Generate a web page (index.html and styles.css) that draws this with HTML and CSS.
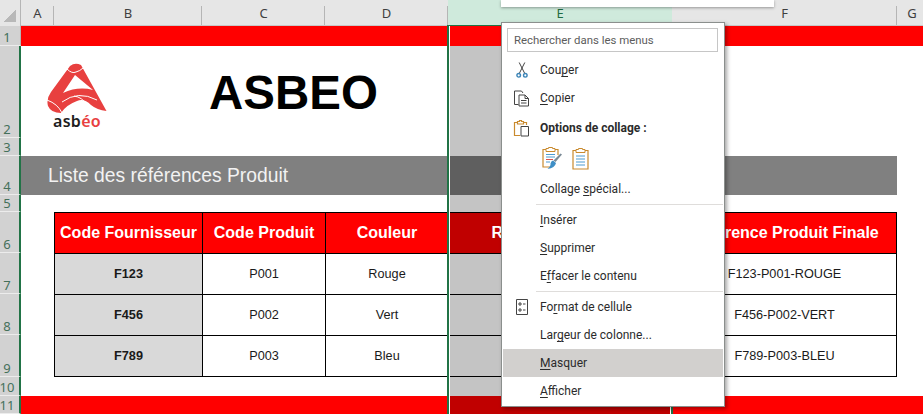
FILE: index.html
```html
<!DOCTYPE html>
<html lang="fr">
<head>
<meta charset="utf-8">
<title>ASBEO - Liste des références Produit</title>
<link rel="stylesheet" href="styles.css">
</head>
<body>
<div class="sheet">
  <div class="corner"><span class="corner-mark"></span></div>
  <div class="ch ca">A</div>
  <div class="ch cb">B</div>
  <div class="ch cc">C</div>
  <div class="ch cd">D</div>
  <div class="ch ce ch-active">E</div>
  <div class="ch cf">F</div>
  <div class="ch cg">G</div>

  <div class="rh r1 rh-first">1</div>
  <div class="rh r2">2</div>
  <div class="rh r3">3</div>
  <div class="rh r4">4</div>
  <div class="rh r5">5</div>
  <div class="rh r6">6</div>
  <div class="rh r7">7</div>
  <div class="rh r8">8</div>
  <div class="rh r9">9</div>
  <div class="rh r10">10</div>
  <div class="rh r11">11</div>

  <div class="red r1 span-all"></div>

  <div class="logo-cell r2">
    <div class="logo">
      <svg class="logo-mark" viewBox="47 62 60 52" width="60" height="52" aria-hidden="true">
        <path class="logo-fill" fill-rule="evenodd" d="M70 66Q75 62 81 65L106.500 111Q97 110 91 105Q84 98 77 101Q66 105 61 113Q51 113 48 106Q46 99 51 92ZM75 75L63 93Q78 86 93 90Z"/>
        <path class="logo-line" d="M67 69Q72 74 76 72Q80 71 83 68M47 100Q58 104 62 113M62 102Q78 90 97 100M74 96Q82 97 87 105"/>
      </svg>
      <div class="logo-text">asb<span class="logo-accent">éo</span></div>
    </div>
  </div>
  <div class="title r2">ASBEO</div>
  <div class="sel ce r2"></div>
  <div class="sel ce r3"></div>
  <div class="band r4 span-left">Liste des références Produit</div>
  <div class="band band-sel ce r4"></div>
  <div class="band cf r4"></div>
  <div class="sel ce r5"></div>

  <div class="cell head cb r6 first-col">Code Fournisseur</div>
  <div class="cell head cc r6">Code Produit</div>
  <div class="cell head cd r6">Couleur</div>
  <div class="cell head head-sel ce r6">Référence Produit</div>
  <div class="cell head cf r6 last-col">Référence Produit Finale</div>

  <div class="cell code cb r7 first-col">F123</div>
  <div class="cell cc r7">P001</div>
  <div class="cell cd r7">Rouge</div>
  <div class="cell cell-sel ce r7"></div>
  <div class="cell cf r7 last-col">F123-P001-ROUGE</div>

  <div class="cell code cb r8 first-col">F456</div>
  <div class="cell cc r8">P002</div>
  <div class="cell cd r8">Vert</div>
  <div class="cell cell-sel ce r8"></div>
  <div class="cell cf r8 last-col">F456-P002-VERT</div>

  <div class="cell code cb r9 first-col last-row">F789</div>
  <div class="cell cc r9 last-row">P003</div>
  <div class="cell cd r9 last-row">Bleu</div>
  <div class="cell cell-sel ce r9 last-row"></div>
  <div class="cell cf r9 last-col last-row">F789-P003-BLEU</div>

  <div class="sel ce r10"></div>

  <div class="red r11 span-left"></div>
  <div class="red red-sel ce r11"></div>
  <div class="red r11 span-right"></div>

  <div class="selection ce"></div>
</div>

<div class="ribbon-popup"></div>

<nav class="menu">
  <div class="search">Rechercher dans les menus</div>
  <div class="item">
    <span class="ico">
      <svg viewBox="0 0 12 16" width="12" height="16" aria-hidden="true">
        <path class="i-dark" d="M3.200 .5L8.500 11M8.800 .5L3.500 11"/>
        <circle class="i-blue" cx="2.700" cy="13.300" r="1.800"/>
        <circle class="i-blue" cx="9.300" cy="13.300" r="1.800"/>
      </svg>
    </span>
    <span>Cou<u>p</u>er</span>
  </div>
  <div class="item">
    <span class="ico">
      <svg viewBox="0 0 17 17" width="17" height="17" aria-hidden="true">
        <path class="i-dark" d="M5.500 14.500H1.500V1H8.500L10 3"/>
        <path class="i-dark" d="M6 5H12L15.500 8.500V16H6ZM12 5V8.500H15.500M8 10.500H13.500M8 13H13.500"/>
      </svg>
    </span>
    <span><u>C</u>opier</span>
  </div>
  <div class="item item-title">
    <span class="ico">
      <svg viewBox="0 0 17 17" width="17" height="17" aria-hidden="true">
        <path class="i-orange" d="M4.500 2.500H1.500V15.500H7M10.500 2.500H13.500V5"/>
        <path class="i-orange" d="M4.500 4V1.500H6.500V.5H8.500V1.500H10.500V4Z"/>
        <path class="i-dark" d="M8 6.500H15.500V16H8Z"/>
      </svg>
    </span>
    <span class="title-text">Options de collage :</span>
  </div>
  <div class="paste-row">
    <svg viewBox="0 0 21 23" width="21" height="23" aria-hidden="true">
      <path class="i-orange" d="M4 2.500H1V20H8M13 2.500H16V8"/>
      <path class="i-orange-fill" d="M4 4.500V1.500H6.500V.5H10.500V1.500H13V4.500Z"/>
      <path class="i-blue-line" d="M4 7.500H13M4 10H13"/>
      <path class="i-red-line" d="M4 12.500H11"/>
      <path class="i-blue-line" d="M4 15H8"/>
      <path class="i-brush" d="M20 7.500L13.500 15L11.500 13.500L18.500 6.500Z"/>
      <path class="i-brush-head" d="M11 13.500L14 16Q13 21 5.500 22Q9 19 8.500 16.500Q9 14 11 13.500Z"/>
    </svg>
    <svg viewBox="0 0 17 22" width="17" height="22" aria-hidden="true">
      <path class="i-orange" d="M4 2.500H1V21H16V2.500H13"/>
      <path class="i-orange-fill" d="M4 4.500V1.500H6.500V.5H10.500V1.500H13V4.500Z"/>
      <path class="i-blue-line" d="M4 8H13M4 11H13M4 14H13M4 17H13"/>
    </svg>
  </div>
  <div class="item"><span class="ico"></span><span>Collage <u>s</u>pécial...</span></div>
  <div class="sep"></div>
  <div class="item"><span class="ico"></span><span><u>I</u>nsérer</span></div>
  <div class="item"><span class="ico"></span><span><u>S</u>upprimer</span></div>
  <div class="item"><span class="ico"></span><span>E<u>f</u>facer le contenu</span></div>
  <div class="sep"></div>
  <div class="item">
    <span class="ico">
      <svg viewBox="0 0 12 16" width="12" height="16" aria-hidden="true">
        <path class="i-dark" d="M.5.5H11.500V15.500H.5Z"/>
        <path class="i-dark" d="M3 4H5V6H3ZM3 10H5V12H3ZM7 5H9.500M7 11H9.500"/>
      </svg>
    </span>
    <span>Fo<u>r</u>mat de cellule</span>
  </div>
  <div class="item"><span class="ico"></span><span>Lar<u>g</u>eur de colonne...</span></div>
  <div class="item item-hover"><span class="ico"></span><span><u>M</u>asquer</span></div>
  <div class="item"><span class="ico"></span><span><u>A</u>fficher</span></div>
</nav>
</body>
</html>
```
FILE: styles.css
```css
* {
  box-sizing: border-box;
}

html,
body {
  margin: 0;
  height: 100%;
  overflow: hidden;
  background: #fff;
}

.sheet {
  display: grid;
  grid-template-columns: 21px 33px 148px 123px 123px 224px 225px 30px;
  grid-template-rows: 26px 20px 92px 18px 39px 17px 41px 41px 41px 42px 19px 18px;
  width: 927px;
  height: 414px;
  font-family: "Liberation Sans", Arial, sans-serif;
}

/* columns */
.ca { grid-column: 2; }
.cb { grid-column: 3; }
.cc { grid-column: 4; }
.cd { grid-column: 5; }
.ce { grid-column: 6; }
.cf { grid-column: 7; }
.cg { grid-column: 8; }
.span-left { grid-column: 2 / 6; }
.span-right { grid-column: 7 / 9; }
.span-all { grid-column: 2 / 9; }

/* rows */
.r1 { grid-row: 2; }
.r2 { grid-row: 3; }
.r3 { grid-row: 4; }
.r4 { grid-row: 5; }
.r5 { grid-row: 6; }
.r6 { grid-row: 7; }
.r7 { grid-row: 8; }
.r8 { grid-row: 9; }
.r9 { grid-row: 10; }
.r10 { grid-row: 11; }
.r11 { grid-row: 12; }

/* headers */
.corner {
  grid-column: 1;
  grid-row: 1;
  display: flex;
  align-items: flex-end;
  justify-content: flex-end;
  padding: 0 4px 4px 0;
  background: #e6e6e6;
  border-right: 1px solid #b5b5b5;
}

.corner-mark {
  width: 12px;
  height: 12px;
  background: linear-gradient(to bottom right, transparent 50%, #b8b8b8 50%);
}

.ch {
  grid-row: 1;
  display: flex;
  align-items: flex-end;
  justify-content: center;
  padding-bottom: 3px;
  background: linear-gradient(to right, #e6e6e6 calc(100% - 1px), #b5b5b5 calc(100% - 1px)) bottom / 100% 19px no-repeat, #e6e6e6;
  border-bottom: 1px solid #c8c8c8;
  color: #3f3f3f;
  font: 13px/18px "Noto Sans", sans-serif;
}

.ch-active {
  background: #cfeadc;
  border-bottom-color: #217346;
  color: #1f6b42;
}

.rh {
  grid-column: 1;
  display: flex;
  align-items: flex-end;
  justify-content: center;
  padding-right: 5px;
  background: #d2d2d2;
  border-right: 2px solid #217346;
  border-bottom: 1px solid #ececec;
  color: #44705a;
  font: 13px/16px "Noto Sans", sans-serif;
}

.rh-first {
  border-right: 1px solid #b5b5b5;
  padding-right: 6px;
}

/* sheet content */
.red {
  background: #f00;
}

.red-sel {
  background: #c00000;
}

.logo-cell {
  grid-column: 1 / 4;
  padding: 16px 0 0 47px;
}

.logo {
  display: flex;
  flex-direction: column;
  align-items: center;
  width: 60px;
}

.logo-mark {
  display: block;
}

.logo-fill {
  fill: #e8403f;
}

.logo-line {
  fill: none;
  stroke: #fff;
  stroke-width: 1;
}

.logo-text {
  color: #1f1f1f;
  font: 600 16px/15px "Noto Sans", sans-serif;
  letter-spacing: 0.3px;
}

.logo-accent {
  color: #e8403f;
}

.title {
  grid-column: 4 / 6;
  display: flex;
  align-items: center;
  padding-left: 7px;
  color: #000;
  font-size: 47.500px;
  font-weight: 700;
}

.sel {
  background: #c4c4c4;
}

.band {
  display: flex;
  align-items: center;
  padding-left: 27px;
  background: #808080;
  color: #f2f2f2;
  font-size: 19.300px;
}

.band-sel {
  background: #5f5f5f;
}

.cell {
  display: flex;
  align-items: center;
  justify-content: center;
  border-top: 1px solid #000;
  border-left: 1px solid #000;
  background: #fff;
  color: #1a1a1a;
  font-size: 12.700px;
}

.first-col {
  border-left: 1px solid #000;
}

.last-col {
  border-right: 1px solid #000;
}

.last-row {
  border-bottom: 1px solid #000;
}

.head {
  background: #f00;
  color: #fff;
  font-size: 16px;
  font-weight: 700;
  white-space: nowrap;
}

.head-sel {
  background: #c00000;
}

.code {
  background: #d9d9d9;
  font-size: 12.700px;
  font-weight: 700;
}

.cell-sel {
  background: #c4c4c4;
}

.selection {
  grid-row: 1 / 13;
  margin: 25px -1px 0 -1px;
  border: 1px solid #217346;
  border-width: 1px 2px 0;
  box-shadow: inset 1px 0 0 #fff, inset -1px 0 0 #fff;
  pointer-events: none;
}

/* floating */
.ribbon-popup {
  position: absolute;
  left: 501px;
  top: 0;
  width: 273px;
  height: 7px;
  background: #fff;
  box-shadow: 0 1px 3px rgba(0, 0, 0, 0.35);
}

.menu {
  position: absolute;
  left: 501px;
  top: 22px;
  width: 224px;
  height: 385px;
  padding: 5px 1px 0;
  border: 1px solid #8b8f8d;
  background: #fff;
  box-shadow: 2px 2px 4px rgba(0, 0, 0, 0.35);
  color: #2b2b2b;
  font: 12px/16px Roboto, sans-serif;
}

.search {
  display: flex;
  align-items: center;
  height: 24px;
  margin: 0 5px 4px 4px;
  padding-left: 6px;
  border: 1px solid #c6c6c6;
  color: #5c5c5c;
  font-size: 11.400px;
}

.item {
  display: flex;
  align-items: center;
  height: 28px;
}

.item-title {
  margin-top: 2px;
}

.item-hover {
  background: #d2d0ce;
}

.ico {
  display: flex;
  flex: none;
  align-items: center;
  justify-content: center;
  width: 37px;
}

.title-text {
  font-weight: 700;
}

.paste-row {
  display: flex;
  align-items: center;
  gap: 9px;
  height: 33px;
  padding-left: 39px;
}

.sep {
  height: 1px;
  margin: 1px 0 1px 33px;
  background: #dfdddb;
}

u {
  text-underline-offset: 2px;
}

.i-dark {
  fill: none;
  stroke: #444;
  stroke-width: 1;
}

.i-blue {
  fill: none;
  stroke: #3d86b8;
  stroke-width: 1.400;
}

.i-orange {
  fill: none;
  stroke: #c98a2e;
  stroke-width: 1.200;
}

.i-orange-fill {
  fill: #fff;
  stroke: #c98a2e;
  stroke-width: 1;
}

.i-blue-line {
  fill: none;
  stroke: #4d9bd0;
  stroke-width: 1;
}

.i-red-line {
  fill: none;
  stroke: #d9534f;
  stroke-width: 1;
}

.i-brush {
  fill: #7a8a96;
}

.i-brush-head {
  fill: #3f8fc6;
}
```
